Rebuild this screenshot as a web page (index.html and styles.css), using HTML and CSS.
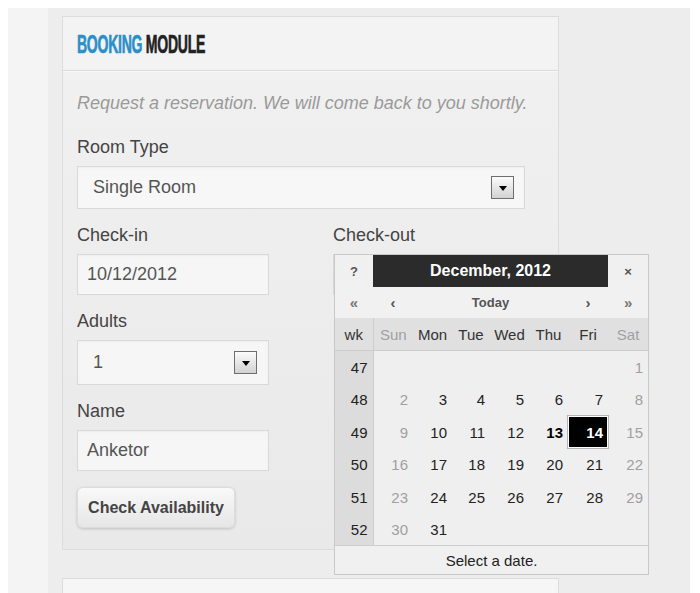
FILE: index.html
```html
<!DOCTYPE html>
<html lang="en">
<head>
<meta charset="utf-8">
<title>Booking Module</title>
<link rel="stylesheet" href="styles.css">
</head>
<body>
<div class="page">
  <aside class="strip"></aside>
  <main class="main">
    <section class="panel">
      <header class="panel-head">
        <h2 class="title"><span class="t-blue">BOOKING</span> <span class="t-dark">MODULE</span></h2>
      </header>
      <div class="panel-body">
        <p class="intro">Request a reservation. We will come back to you shortly.</p>
        <div class="field room">
          <label class="label">Room Type</label>
          <div class="select select-room"><span>Single Room</span><span class="arrow"></span></div>
        </div>
        <div class="cols">
          <div class="col">
            <div class="field">
              <label class="label">Check-in</label>
              <div class="input">10/12/2012</div>
            </div>
            <div class="field">
              <label class="label">Adults</label>
              <div class="select select-small"><span>1</span><span class="arrow"></span></div>
            </div>
            <div class="field">
              <label class="label">Name</label>
              <div class="input">Anketor</div>
            </div>
            <button class="btn" type="button">Check Availability</button>
          </div>
          <div class="col">
            <div class="field checkout">
              <label class="label">Check-out</label>
              <div class="input"></div>
              <div class="cal">
                <table class="cal-table">
                  <colgroup>
                    <col class="c-wk"><col class="c-40"><col class="c-39"><col class="c-38"><col class="c-39"><col class="c-39"><col class="c-40"><col class="c-40">
                  </colgroup>
                  <thead>
                    <tr class="r-title">
                      <td class="btn-cell">?</td>
                      <td class="month" colspan="6">December, 2012</td>
                      <td class="btn-cell">×</td>
                    </tr>
                    <tr class="r-nav">
                      <td class="nav dim">«</td>
                      <td class="nav">‹</td>
                      <td class="nav today" colspan="4">Today</td>
                      <td class="nav">›</td>
                      <td class="nav dim">»</td>
                    </tr>
                    <tr class="r-days">
                      <td class="wk-h">wk</td>
                      <td class="we">Sun</td><td>Mon</td><td>Tue</td><td>Wed</td><td>Thu</td><td>Fri</td><td class="we">Sat</td>
                    </tr>
                  </thead>
                  <tbody>
                    <tr class="r-a"><td class="wk">47</td><td></td><td></td><td></td><td></td><td></td><td></td><td class="d we">1</td></tr>
                    <tr class="r-b"><td class="wk">48</td><td class="d we">2</td><td class="d">3</td><td class="d">4</td><td class="d">5</td><td class="d">6</td><td class="d">7</td><td class="d we">8</td></tr>
                    <tr class="r-a"><td class="wk">49</td><td class="d we">9</td><td class="d">10</td><td class="d">11</td><td class="d">12</td><td class="d today-d">13</td><td class="d sel">14</td><td class="d we">15</td></tr>
                    <tr class="r-b"><td class="wk">50</td><td class="d we">16</td><td class="d">17</td><td class="d">18</td><td class="d">19</td><td class="d">20</td><td class="d">21</td><td class="d we">22</td></tr>
                    <tr class="r-a"><td class="wk">51</td><td class="d we">23</td><td class="d">24</td><td class="d">25</td><td class="d">26</td><td class="d">27</td><td class="d">28</td><td class="d we">29</td></tr>
                    <tr class="r-a"><td class="wk">52</td><td class="d we">30</td><td class="d">31</td><td></td><td></td><td></td><td></td><td></td></tr>
                  </tbody>
                  <tfoot>
                    <tr class="r-foot"><td colspan="8">Select a date.</td></tr>
                  </tfoot>
                </table>
              </div>
            </div>
          </div>
        </div>
      </div>
    </section>
    <section class="panel panel2"></section>
  </main>
</div>
</body>
</html>
```

FILE: styles.css
```css
html, body {
  background: #ffffff;
}
body {
  margin: 8px 8px 0 8px;
  font-family: "Liberation Sans", Arial, sans-serif;
  color: #444;
  overflow: hidden;
}
.page {
  width: 682px;
  height: 585px;
  overflow: hidden;
  display: flex;
  background: #ededed;
}
.strip {
  width: 40px;
  flex: none;
  background: #f4f4f4;
}
.main {
  flex: 1;
  padding: 8px 0 0 14px;
}
.panel {
  width: 497px;
  box-sizing: border-box;
  border: 1px solid #dcdcdc;
  background: linear-gradient(#f1f1f1, #e9e9e9);
}
.panel-head {
  height: 53px;
  background: #f3f3f3;
  border-bottom: 1px solid #dadada;
  box-shadow: 0 1px 0 #f8f8f8;
  padding-left: 14px;
  display: flex;
  align-items: center;
}
.title {
  margin: 0;
  font-family: "Liberation Sans", Arial, sans-serif;
  font-weight: bold;
  font-size: 26px;
  line-height: 26px;
  display: inline-block;
  transform: scaleX(0.54);
  transform-origin: left center;
  white-space: nowrap;
  letter-spacing: -0.5px;
}
.t-blue { color: #2b8fc8; -webkit-text-stroke: 0.7px #2b8fc8; }
.t-dark { color: #222; -webkit-text-stroke: 0.7px #222; }

.panel-body {
  padding: 22px 14px 21px 14px;
}
.intro {
  margin: 0;
  font-style: italic;
  font-size: 18px;
  line-height: 20px;
  color: #9a9a9a;
  white-space: nowrap;
}
.field.room {
  margin-top: 24px;
}
.label {
  display: block;
  font-size: 18px;
  line-height: 20px;
  color: #444;
  margin-bottom: 9px;
}
.field + .field {
  margin-top: 16px;
}
.input, .select {
  box-sizing: border-box;
  background: #f6f6f6;
  border: 1px solid #d9d9d9;
  box-shadow: inset 0 1px 2px rgba(0,0,0,0.04);
  font-size: 18px;
  color: #555;
}
.input {
  height: 41px;
  padding-left: 9px;
  line-height: 39px;
}
.select {
  display: flex;
  align-items: center;
  justify-content: space-between;
  padding: 0 10px 0 15px;
}
.select-room {
  width: 448px;
  height: 43px;
  background: #f7f7f7;
}
.select-small {
  height: 45px;
  padding-right: 11px;
}
.arrow {
  width: 23px;
  height: 23px;
  box-sizing: border-box;
  border: 1px solid #6e6e6e;
  background: linear-gradient(#fbfbfb, #d2d2d2);
  display: flex;
  align-items: center;
  justify-content: center;
}
.arrow::after {
  content: "";
  border-left: 4px solid transparent;
  border-right: 4px solid transparent;
  border-top: 5px solid #000;
  margin-top: 1px;
}
.cols {
  margin-top: 16px;
  display: grid;
  grid-template-columns: 192px 192px;
  column-gap: 64px;
}
.btn {
  margin-top: 16px;
  width: 158px;
  height: 41px;
  border: 1px solid #dcdcdc;
  border-radius: 6px;
  background: linear-gradient(#f9f9f9, #e6e6e6);
  box-shadow: 0 1px 3px rgba(0,0,0,0.18);
  font-family: "Liberation Sans", Arial, sans-serif;
  font-weight: bold;
  font-size: 16px;
  color: #444;
  padding: 0;
}
.panel2 {
  margin-top: 28px;
  height: 60px;
  background: #f6f6f6;
}

/* calendar popup */
.checkout {
  position: relative;
}
.cal {
  position: absolute;
  top: 29px;
  left: 1px;
  width: 315px;
  box-sizing: border-box;
  border: 1px solid #c8c8c8;
  background: #efefef;
  z-index: 5;
}
.cal-table {
  width: 313px;
  table-layout: fixed;
  border-collapse: collapse;
  font-family: "Liberation Sans", Arial, sans-serif;
  font-size: 15px;
  color: #222;
}
.cal-table td {
  padding: 0;
  text-align: center;
}
.c-wk { width: 38px; }
.c-40 { width: 40px; }
.c-39 { width: 39px; }
.c-38 { width: 38px; }
.r-title td { height: 32px; }
.btn-cell {
  background: #f0f0f0;
  color: #555;
  font-weight: bold;
  font-size: 13px;
}
.month {
  background: #2b2b2b;
  color: #fff;
  font-weight: bold;
  font-size: 16px;
}
.r-nav td {
  height: 31px;
  background: #f1f1f1;
  color: #555;
  font-weight: bold;
  font-size: 13px;
}
.r-nav .nav:not(.today) { font-size: 15px; }
.r-nav .dim { color: #777; font-size: 14px; }
.r-days td {
  height: 32px;
  background: #e0e0e0;
  color: #333;
  border-bottom: 1px solid #cdcdcd;
}
.r-days .wk-h {
  border-right: 1px solid #cdcdcd;
}
.r-days .we { color: #a0a0a0; }
.r-a td { height: 32px; }
.r-b td { height: 33px; }
.wk {
  background: #dcdcdc;
  border-right: 1px solid #cdcdcd;
  text-align: right !important;
  padding-right: 5px !important;
  color: #222;
}
.d {
  text-align: right !important;
  padding-right: 5px !important;
}
.d.we { color: #a0a0a0; }
.today-d { font-weight: bold; color: #000; }
.sel {
  background: #000;
  color: #fff;
  font-weight: bold;
  box-shadow: inset 0 0 0 1px #fff, 0 0 0 1px #b5b5b5;
}
.r-foot td {
  height: 28px;
  border-top: 1px solid #cdcdcd;
  background: #f0f0f0;
  color: #222;
}
```
